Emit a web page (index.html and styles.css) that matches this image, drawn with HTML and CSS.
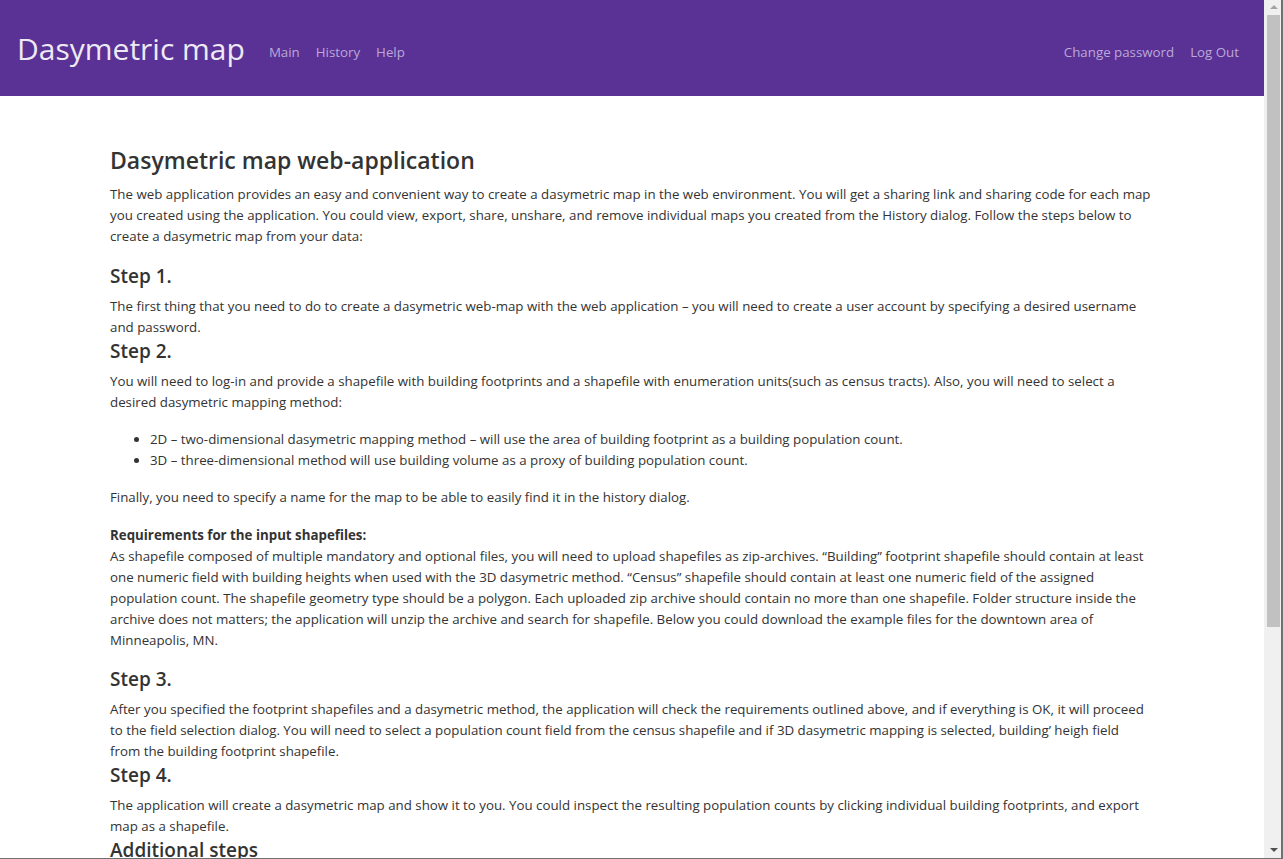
FILE: index.html
```html
<!DOCTYPE html>
<html lang="en">
<head>
<meta charset="utf-8">
<title>Dasymetric map</title>
<link rel="stylesheet" href="styles.css">
</head>
<body>
<div class="window">
<div class="page">
<nav class="navbar">
  <a class="brand" href="#">Dasymetric map</a>
  <ul class="nav-links">
    <li><a href="#">Main</a></li>
    <li><a href="#">History</a></li>
    <li><a href="#">Help</a></li>
  </ul>
  <ul class="nav-links nav-right">
    <li><a href="#">Change password</a></li>
    <li><a href="#">Log Out</a></li>
  </ul>
</nav>
<main class="container">
  <h1 class="title">Dasymetric map web-application</h1>
  <p class="intro">The web application provides an easy and convenient way to create a dasymetric map in the web environment. You will get a sharing link and sharing code for each map you created using the application. You could view, export, share, unshare, and remove individual maps you created from the History dialog. Follow the steps below to create a dasymetric map from your data:</p>

  <h3 class="step">Step 1.</h3>
  <p class="text">The first thing that you need to do to create a dasymetric web-map with the web application – you will need to create a user account by specifying a desired username and password.</p>

  <h3 class="step">Step 2.</h3>
  <p class="text">You will need to log-in and provide a shapefile with building footprints and a shapefile with enumeration units(such as census tracts). Also, you will need to select a desired dasymetric mapping method:</p>
  <ul class="methods">
    <li>2D – two-dimensional dasymetric mapping method – will use the area of building footprint as a building population count.</li>
    <li>3D – three-dimensional method will use building volume as a proxy of building population count.</li>
  </ul>
  <p class="text spaced">Finally, you need to specify a name for the map to be able to easily find it in the history dialog.</p>
  <p class="text req"><strong>Requirements for the input shapefiles:</strong><br>As shapefile composed of multiple mandatory and optional files, you will need to upload shapefiles as zip-archives. “Building” footprint shapefile should contain at least one numeric field with building heights when used with the 3D dasymetric method. “Census” shapefile should contain at least one numeric field of the assigned population count. The shapefile geometry type should be a polygon. Each uploaded zip archive should contain no more than one shapefile. Folder structure inside the archive does not matters; the application will unzip the archive and search for shapefile. Below you could download the example files for the downtown area of Minneapolis, MN.</p>

  <h3 class="step">Step 3.</h3>
  <p class="text">After you specified the footprint shapefiles and a dasymetric method, the application will check the requirements outlined above, and if everything is OK, it will proceed to the field selection dialog. You will need to select a population count field from the census shapefile and if 3D dasymetric mapping is selected, building’ heigh field<br>from the building footprint shapefile.</p>

  <h3 class="step">Step 4.</h3>
  <p class="text">The application will create a dasymetric map and show it to you. You could inspect the resulting population counts by clicking individual building footprints, and export map as a shapefile.</p>

  <h3 class="step">Additional steps</h3>
  <p class="text">You could view, export, share, unshare, and remove individual maps you created from the History dialog. Each shared map gets a sharing link and a sharing code that could be embedded into other web pages.</p>
  <p class="text spaced">Example files for the downtown area of Minneapolis, MN:</p>
  <ul class="methods">
    <li><a class="link" href="#">Buildings.zip</a> – building footprints with heights.</li>
    <li><a class="link" href="#">Census.zip</a> – census tracts with population counts.</li>
  </ul>
</main>
</div>
<div class="scrollbar" aria-hidden="true">
  <div class="sb-btn"><span class="arrow-up"></span></div>
  <div class="sb-track"><div class="sb-thumb"></div></div>
  <div class="sb-btn"><span class="arrow-down"></span></div>
</div>
</div>
</body>
</html>
```

FILE: styles.css
```css
html, body {
  margin: 0;
  padding: 0;
  height: 100%;
  overflow: hidden;
}
body {
  font-family: "Open Sans", "Noto Sans", sans-serif;
  font-size: 13.3px;
  line-height: 21px;
  color: #333333;
  background: #ffffff;
}
a { text-decoration: none; }

.window {
  display: flex;
  height: 100vh;
  box-sizing: border-box;
  border-right: 2px solid #707070;
  border-bottom: 1px solid #707070;
}
.page {
  flex: 1;
  min-width: 0;
  overflow: hidden;
}

/* window scrollbar */
.scrollbar {
  width: 17px;
  flex: none;
  display: flex;
  flex-direction: column;
  background: #f0f0f0;
}
.sb-btn {
  height: 14px;
  display: flex;
  align-items: center;
  justify-content: center;
  padding-left: 2px;
}
.sb-btn:last-child { height: 17px; }
.arrow-up {
  width: 0;
  height: 0;
  border-left: 4px solid transparent;
  border-right: 4px solid transparent;
  border-bottom: 4px solid #a3a3a3;
}
.arrow-down {
  width: 0;
  height: 0;
  border-left: 4px solid transparent;
  border-right: 4px solid transparent;
  border-top: 4px solid #505050;
}
.sb-track {
  flex: 1;
  padding: 1px 1px 0 3px;
}
.sb-thumb {
  height: 612px;
  background: #c1c1c1;
}

.navbar {
  display: flex;
  align-items: center;
  height: 96px;
  background: #5a3195;
  padding: 4px 25px 0 17px;
  box-sizing: border-box;
}
.brand {
  font-size: 30px;
  color: #eeeaf4;
  margin-right: 24px;
  line-height: 40px;
  padding-bottom: 2px;
}
.nav-links {
  display: flex;
  list-style: none;
  margin: 4px 0 0;
  padding: 0;
  gap: 16px;
}
.nav-links a {
  color: #bba8d8;
  font-size: 13.3px;
}
.nav-right { margin-left: auto; }

.container {
  max-width: 1044px;
  margin: 0 auto;
  padding: 48px 15px 60px;
}
.title {
  font-size: 23px;
  font-weight: 600;
  line-height: 32px;
  margin: 0 0 8px;
  color: #333333;
}
.intro { margin: 0 0 16px; }
.step {
  font-size: 19px;
  font-weight: 600;
  line-height: 26px;
  margin: 0 0 7px;
  color: #333333;
}
.text { margin: 0; }
.methods {
  margin: 16px 0 16px;
  padding-left: 40px;
}
.spaced { margin-bottom: 17px; }
.req { margin-bottom: 15px; }
.link { color: #5a3195; }
```
